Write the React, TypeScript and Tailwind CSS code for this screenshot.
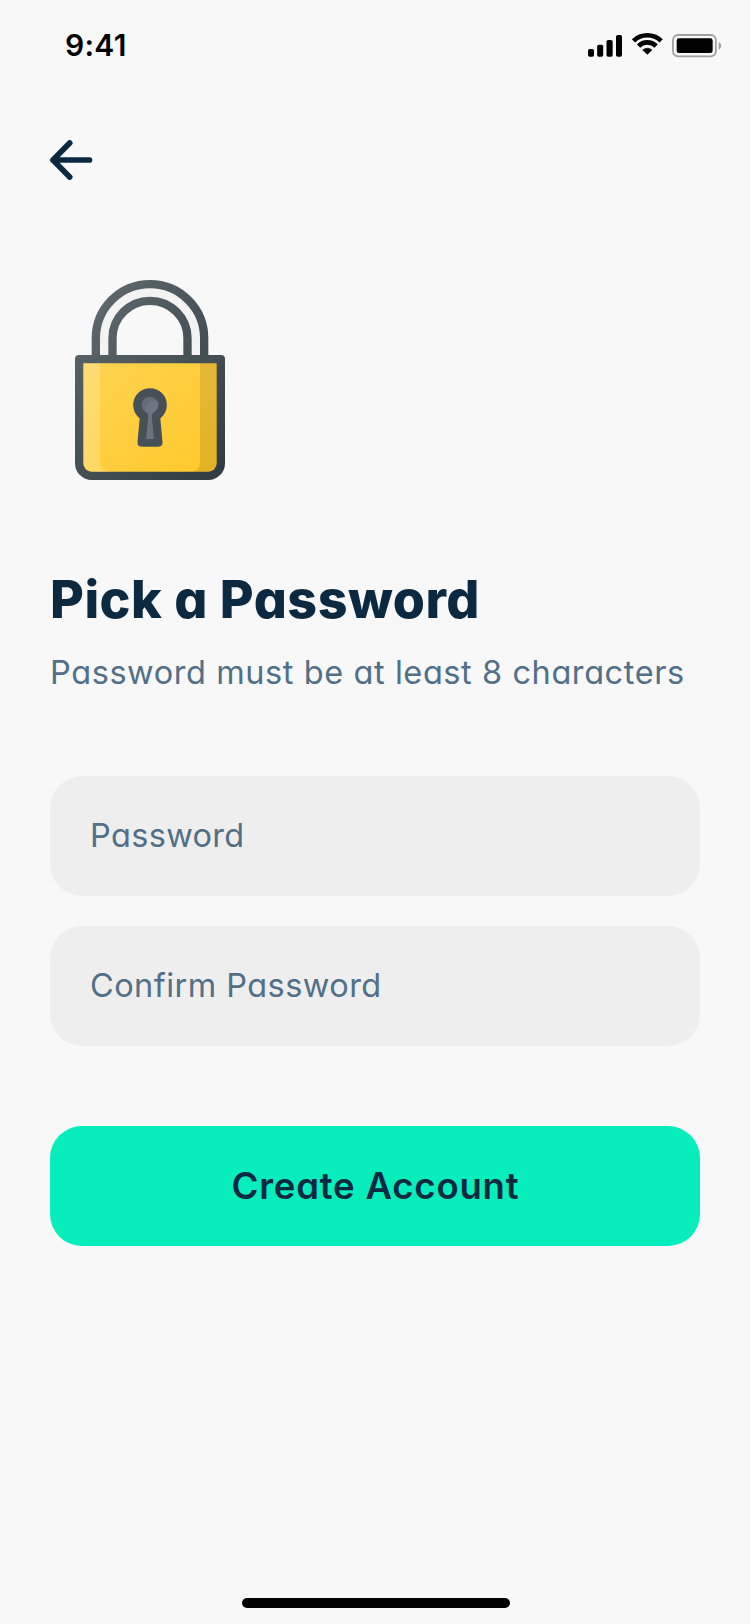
function StatusIcons() {
  return (
    <svg className="h-[60px] w-[170px]" viewBox="0 0 510 180" fill="none" aria-hidden="true">
      <g fill="#000">
        <rect x="54" y="87" width="18" height="23" rx="5" />
        <rect x="81.500" y="74" width="18" height="36" rx="5" />
        <rect x="109.500" y="60" width="18.500" height="50" rx="5" />
        <rect x="138" y="45" width="18" height="65" rx="5" />
        <path d="M232 103L218 90A21 21 0 0 1 246 90Z" stroke="#000" strokeWidth="2" strokeLinejoin="round" />
      </g>
      <path d="M190.500 62.500A59.500 59.500 0 0 1 273.500 62.500" stroke="#000" strokeWidth="14" />
      <path d="M205.500 78A38 38 0 0 1 258.500 78" stroke="#000" strokeWidth="14" />
      <rect x="309" y="45" width="128.500" height="64" rx="15" stroke="#a0a0a0" strokeWidth="5.500" />
      <rect x="320" y="55" width="108" height="44" rx="7" fill="#000" />
      <path d="M446 66C456 70 456 85 446 89Z" fill="#a0a0a0" />
    </svg>
  );
}

function BackArrow() {
  return (
    <svg className="h-10 w-[43px]" viewBox="0 0 43 40" fill="none" aria-hidden="true">
      <path
        d="M19.700 3L3 20L19.700 37M3 20H39.500"
        stroke="#0b2a42"
        strokeWidth="5.700"
        strokeLinecap="round"
        strokeLinejoin="round"
      />
    </svg>
  );
}

function Padlock() {
  return (
    <svg className="h-[200px] w-[150px]" viewBox="45 30 450 600" fill="none" aria-hidden="true">
      <defs>
        <linearGradient id="steel" gradientUnits="userSpaceOnUse" x1="60" y1="200" x2="440" y2="640">
          <stop offset="0" stopColor="#5a6469" />
          <stop offset="1" stopColor="#303c42" />
        </linearGradient>
        <linearGradient id="shackle" gradientUnits="userSpaceOnUse" x1="130" y1="90" x2="420" y2="280">
          <stop offset="0" stopColor="#5c666b" />
          <stop offset="1" stopColor="#424e54" />
        </linearGradient>
        <linearGradient id="gold" gradientUnits="userSpaceOnUse" x1="90" y1="280" x2="430" y2="605">
          <stop offset="0" stopColor="#ffd351" />
          <stop offset="1" stopColor="#ffc92b" />
        </linearGradient>
      </defs>
      <path d="M132.500 260V205A137.500 137.500 0 0 1 407.500 205V260" stroke="#f3f3f4" strokeWidth="27" />
      <path d="M107.500 260V205A162.500 162.500 0 0 1 432.500 205V260" stroke="url(#shackle)" strokeWidth="25" />
      <path d="M157.500 260V205A112.500 112.500 0 0 1 382.500 205V260" stroke="url(#shackle)" strokeWidth="25" />
      <path
        d="M57 255H483A12 12 0 0 1 495 267V580A50 50 0 0 1 445 630H95A50 50 0 0 1 45 580V267A12 12 0 0 1 57 255Z"
        fill="url(#steel)"
      />
      <path d="M70 280H470V580A25 25 0 0 1 445 605H95A25 25 0 0 1 70 580Z" fill="url(#gold)" />
      <path d="M70 280H120V580A25 25 0 0 0 145 605H95A25 25 0 0 1 70 580Z" fill="#fff" fillOpacity=".2" />
      <path d="M420 280H470V580A25 25 0 0 1 445 605H395A25 25 0 0 0 420 580Z" fill="#000" fillOpacity=".11" />
      <circle cx="270" cy="405" r="50.500" fill="#455157" />
      <path d="M240 435H300L307.500 516Q308.500 530 295 530H245Q231.500 530 232.500 516Z" fill="#455157" />
      <circle cx="270" cy="405" r="25" fill="#656c77" />
      <path d="M258 419A25 25 0 0 1 292 393A25 25 0 0 1 258 426Z" fill="#6f7682" />
      <path d="M260 426H280L275 437L282 507H258L265 437Z" fill="#6c737f" />
    </svg>
  );
}

function Field({ label, tracking }: { label: string; tracking: string }) {
  return (
    <div className="flex h-[120px] items-center rounded-[32px] bg-[#eeeeee] px-10 text-[32.500px] leading-10 text-[#517088]">
      <span className={tracking}>{label}</span>
    </div>
  );
}

export default function App() {
  return (
    <div className="flex h-[1624px] w-[750px] flex-col bg-[#f8f8f8] font-['Inter','Liberation_Sans',sans-serif] [font-feature-settings:'cv11']">
      <header className="flex h-20 items-end justify-between pr-[10px] pl-[65px]">
        <span className="h-[60px] pt-[6px] text-[30px] leading-[38px] font-semibold tracking-[0.3px] text-black">
          9:41
        </span>
        <StatusIcons />
      </header>
      <main className="flex flex-1 flex-col px-[50px]">
        <button className="mt-[60px] h-10 w-[43px]" aria-label="Back">
          <BackArrow />
        </button>
        <div className="mt-[100px] pl-[25px]">
          <Padlock />
        </div>
        <h1 className="mt-[90px] h-[60px] text-[52px] leading-[60px] font-extrabold whitespace-nowrap text-[#0b2a42]">
          <span className="tracking-[0.5px]">Pick a Password</span>
        </h1>
        <p className="mt-[23px] h-10 text-[32.500px] leading-10 whitespace-nowrap text-[#517088]">
          <span className="tracking-[0.58px]">Password must be at least 8 characters</span>
        </p>
        <form className="mt-[83px] flex flex-col">
          <Field label="Password" tracking="tracking-[0.34px]" />
          <div className="mt-[30px]">
            <Field label="Confirm Password" tracking="tracking-[0.44px]" />
          </div>
          <button
            type="button"
            className="mt-20 flex h-[120px] items-center justify-center rounded-[32px] bg-[#07edbc] text-[36.500px] leading-10 font-semibold text-[#0b2a42]"
          >
            <span className="-mr-px tracking-[0.8px]">Create Account</span>
          </button>
        </form>
      </main>
      <footer className="flex h-[26px] justify-center pl-0.5">
        <div className="h-2.5 w-[268px] rounded-full bg-black" />
      </footer>
    </div>
  );
}
